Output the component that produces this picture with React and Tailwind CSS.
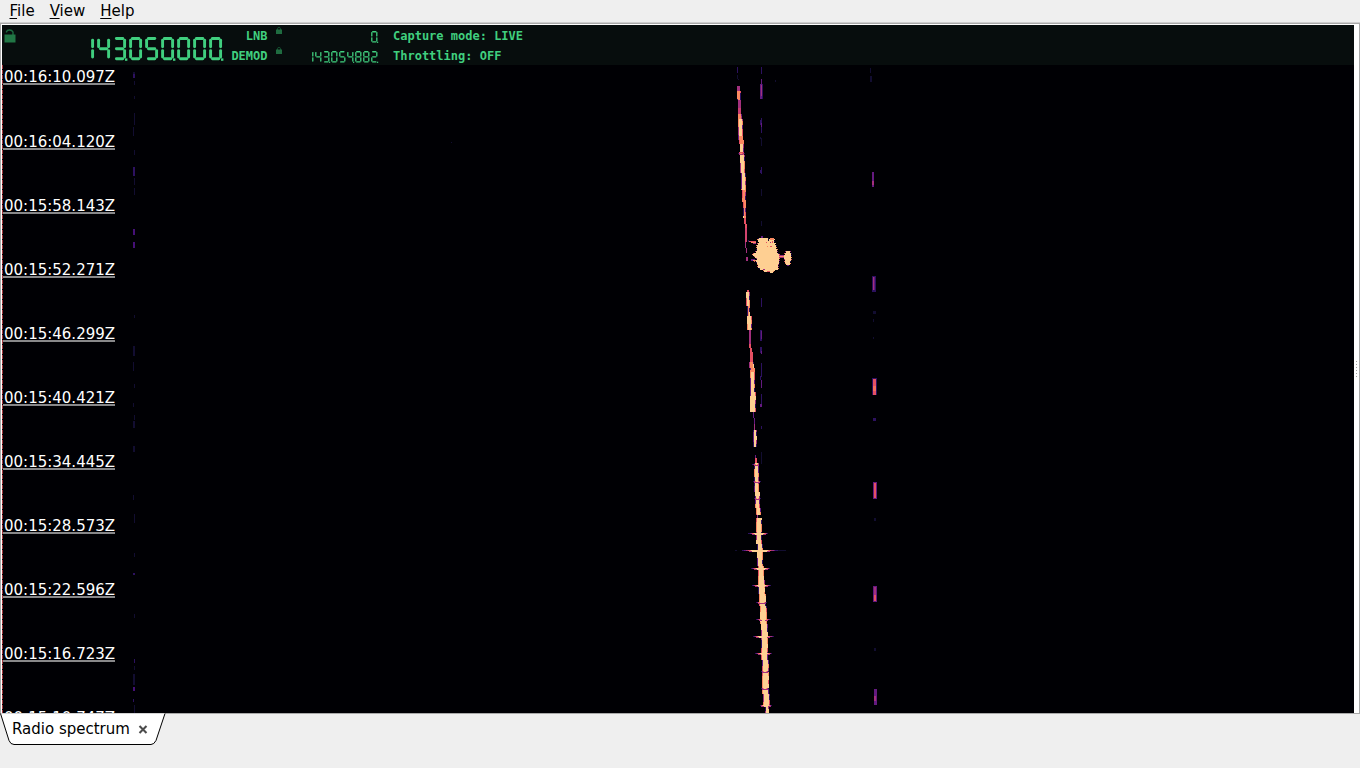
/**
 * Radio spectrum analyzer window
 * Menu bar, frequency readout, waterfall and dock tab
 */

const GREEN = '#40cf7f';

// Lit segments per digit: a top, b/c right, d bottom, e/f left, g middle
const SEGMENTS = {
  0: 'abcdef', 1: 'bc', 2: 'abged', 3: 'abgcd', 4: 'fgbc',
  5: 'afgcd', 6: 'afgedc', 7: 'abc', 8: 'abcdefg', 9: 'abcdfg'
};

// Segment end points on a 13 x 23 cell
const SEGMENT_LINES = {
  a: [3.4, 1.5, 9.8, 1.5],
  b: [11.6, 3.2, 11.6, 9.8],
  c: [11.6, 13.6, 11.6, 20],
  d: [3.4, 21.8, 9.8, 21.8],
  e: [1.6, 13.6, 1.6, 20],
  f: [1.6, 3.2, 1.6, 9.8],
  g: [3.4, 11.7, 9.8, 11.7]
};

const LcdNumber = ({ value, small = false }) => {
  const digits = value.split('');
  const width = digits.length * 16;
  const scale = small ? 0.5 : 1;

  return (
    <svg
      role="img"
      aria-label={value}
      width={width * scale}
      height={24 * scale}
      viewBox={`0 0 ${width} 24`}
      className="shrink-0"
    >
      {digits.map((digit, i) => (
        <g key={i} stroke={GREEN} strokeWidth={small ? 2.6 : 2.9} strokeLinecap="round">
          {SEGMENTS[digit].split('').map((name) => {
            const [x1, y1, x2, y2] = SEGMENT_LINES[name];
            return <line key={name} x1={x1 + i * 16} y1={y1} x2={x2 + i * 16} y2={y2} />;
          })}
          {(digits.length - i) % 3 === 1 && (
            <rect x={i * 16 + 12} y={21.4} width={2.4} height={2.4} fill={GREEN} stroke="none" />
          )}
        </g>
      ))}
    </svg>
  );
};

// Magma-like palette
const CREAM = '#fecf92';
const ORANGE = '#fb8861';
const RED = '#e55063';
const MAGENTA = '#a3307e';
const PURPLE = '#641a80';
const INDIGO = '#2d1160';
const NIGHT = '#120d31';

const FRINGE = [RED, MAGENTA, ORANGE, INDIGO, CREAM, ORANGE, PURPLE];

const noise = (n) => {
  const v = Math.sin(n * 12.9898) * 43758.5453;
  return v - Math.floor(v);
};

// Main carrier: [y start, y end, x start, x end, core width, core colour]
const CARRIER = [
  [67, 73, 737, 737, 1, INDIGO],
  [75, 80, 737, 738, 1, NIGHT],
  [86, 91, 737, 737, 3, MAGENTA],
  [91, 100, 738, 738, 2, ORANGE],
  [100, 108, 738, 738, 3, MAGENTA],
  [108, 114, 738, 738, 3, '#c83e73'],
  [114, 119, 739, 739, 2, ORANGE],
  [119, 136, 739, 739, 3, CREAM],
  [136, 144, 739, 740, 3, ORANGE],
  [144, 152, 741, 741, 2, CREAM],
  [152, 155, 739, 739, 5, RED],
  [155, 190, 741, 742, 3, CREAM],
  [190, 202, 743, 743, 2, ORANGE],
  [202, 218, 744, 744, 1, ORANGE],
  [218, 228, 744, 745, 2, RED],
  [228, 242, 745, 745, 2, '#d3436e'],
  [242, 253, 745, 746, 1, MAGENTA],
  [257, 261, 746, 746, 2, MAGENTA],
  [290, 292, 747, 747, 2, RED],
  [292, 306, 747, 747, 2, CREAM],
  [306, 316, 748, 748, 1, ORANGE],
  [316, 330, 748, 748, 3, CREAM],
  [330, 344, 749, 749, 2, MAGENTA],
  [344, 352, 749, 750, 2, RED],
  [352, 362, 750, 750, 3, RED],
  [362, 372, 750, 751, 3, ORANGE],
  [372, 392, 751, 751, 3, CREAM],
  [392, 412, 751, 751, 4, CREAM],
  [412, 424, 753, 754, 1, PURPLE],
  [424, 430, 754, 754, 1, MAGENTA],
  [430, 447, 754, 754, 2, CREAM],
  [455, 458, 755, 755, 1, PURPLE],
  [458, 463, 755, 755, 2, RED],
  [463, 482, 755, 755, 3, CREAM],
  [482, 500, 755, 756, 3, CREAM],
  [500, 515, 756, 757, 3, CREAM],
  [515, 518, 757, 757, 1, MAGENTA],
  [518, 534, 757, 757, 4, CREAM],
  [534, 552, 757, 758, 4, CREAM],
  [552, 580, 758, 759, 4, CREAM],
  [580, 606, 759, 760, 5, CREAM],
  [606, 640, 761, 762, 5, CREAM],
  [640, 680, 762, 763, 5, CREAM],
  [680, 707, 763, 764, 5, CREAM],
  [707, 713, 766, 766, 2, CREAM]
];

// Horizontal bursts: [y, left, right, core left, core right]
const BURSTS = [
  [153, 738, 745, 740, 742],
  [464, 752, 759, 755, 758],
  [481, 753, 761, 755, 759],
  [498, 754, 761, 756, 759],
  [533, 748, 768, 753, 765],
  [550, 742, 778, 750, 769],
  [568, 751, 770, 755, 767],
  [585, 752, 771, 756, 767],
  [602, 756, 767, 759, 765],
  [619, 756, 771, 760, 767],
  [636, 753, 774, 757, 769],
  [653, 755, 772, 759, 769],
  [671, 761, 769, 763, 767],
  [688, 761, 769, 763, 767],
  [705, 760, 772, 762, 770]
];

// Weaker spurs: [x, y, width, height, colour]
const SPURS = [
  [761, 67, 1, 7, INDIGO], [761, 79, 1, 5, PURPLE], [760, 84, 3, 15, INDIGO], [760, 84, 2, 15, PURPLE], [761, 85, 1, 11, MAGENTA],
  [760, 120, 2, 5, INDIGO], [761, 118, 1, 15, INDIGO], [761, 123, 1, 4, PURPLE], [760, 137, 1, 2, NIGHT], [761, 138, 1, 8, NIGHT],
  [761, 167, 1, 7, INDIGO], [760, 170, 2, 3, INDIGO], [761, 189, 1, 7, NIGHT], [761, 221, 1, 5, NIGHT],
  [761, 298, 1, 9, INDIGO], [760, 330, 2, 11, INDIGO], [761, 331, 1, 8, PURPLE], [760, 347, 2, 6, INDIGO],
  [761, 351, 1, 3, PURPLE], [761, 363, 1, 14, INDIGO], [760, 376, 1, 4, INDIGO], [761, 380, 1, 8, PURPLE],
  [761, 394, 1, 11, INDIGO], [760, 404, 2, 3, PURPLE], [761, 426, 1, 3, INDIGO], [761, 452, 1, 12, NIGHT],
  [870, 68, 1, 5, NIGHT], [870, 76, 2, 6, NIGHT],
  [872, 172, 2, 15, PURPLE], [872, 181, 2, 4, MAGENTA],
  [872, 276, 4, 16, INDIGO], [873, 277, 1, 13, MAGENTA], [874, 277, 1, 13, PURPLE],
  [873, 311, 3, 3, NIGHT], [873, 319, 1, 3, NIGHT], [873, 337, 1, 2, NIGHT],
  [872, 378, 5, 17, INDIGO], [873, 379, 3, 16, RED], [873, 386, 3, 5, '#f66e5c'],
  [873, 418, 3, 3, INDIGO],
  [873, 482, 4, 17, PURPLE], [874, 483, 2, 15, RED],
  [874, 518, 2, 3, NIGHT],
  [873, 586, 4, 16, PURPLE], [874, 587, 2, 9, MAGENTA], [874, 595, 2, 6, RED],
  [874, 648, 2, 3, NIGHT], [874, 689, 3, 16, PURPLE], [874, 696, 2, 5, MAGENTA],
  [133, 74, 2, 4, INDIGO], [133, 167, 2, 9, INDIGO], [133, 229, 2, 6, '#451077'], [133, 242, 2, 6, '#451077'],
  [133, 346, 2, 10, NIGHT], [133, 421, 2, 7, NIGHT], [133, 446, 2, 6, NIGHT], [133, 573, 2, 2, INDIGO],
  [134, 659, 1, 4, INDIGO], [133, 674, 2, 11, NIGHT], [133, 687, 2, 4, '#451077'], [133, 699, 1, 3, INDIGO],
  [133, 72, 2, 2, NIGHT], [134, 81, 1, 4, NIGHT], [134, 96, 1, 3, NIGHT], [134, 113, 1, 12, NIGHT],
  [133, 127, 1, 9, NIGHT], [134, 150, 1, 5, NIGHT], [134, 178, 1, 7, NIGHT], [134, 188, 1, 7, NIGHT],
  [134, 315, 1, 3, NIGHT], [133, 362, 1, 9, NIGHT], [134, 384, 1, 4, NIGHT], [133, 403, 1, 4, NIGHT],
  [134, 415, 1, 5, NIGHT], [133, 495, 1, 5, NIGHT], [134, 514, 1, 9, NIGHT], [134, 553, 1, 4, NIGHT],
  [134, 614, 1, 4, NIGHT], [134, 666, 1, 4, NIGHT], [134, 705, 1, 8, NIGHT],
  [775, 80, 1, 2, NIGHT], [451, 142, 1, 1, NIGHT], [735, 550, 2, 1, NIGHT], [778, 550, 8, 1, NIGHT]
];

// Meteor echo, one span per two rows: [y, left, right]
const ECHO = [
  [238, 759, 768], [239, 758, 774], [241, 759, 774], [243, 758, 775], [245, 757, 776],
  [247, 757, 776], [249, 757, 777], [251, 756, 777], [253, 754, 778], [254, 753, 779],
  [256, 755, 779], [258, 757, 779], [260, 756, 779], [262, 757, 779], [264, 758, 778],
  [266, 758, 778], [268, 760, 778], [270, 764, 774], [271, 770, 773]
];

const ECHO_TAIL = [
  [251, 786, 790], [253, 785, 791], [255, 784, 791], [257, 784, 791],
  [259, 785, 791], [261, 785, 790], [263, 786, 790]
];

const Carrier = () => {
  const rects = [];
  CARRIER.forEach(([y0, y1, x0, x1, width, color]) => {
    for (let y = y0; y < y1; y += 2) {
      const height = Math.min(2, y1 - y);
      const x = Math.round(x0 + ((x1 - x0) * (y - y0)) / (y1 - y0));
      const bright = color === CREAM || color === ORANGE;
      if (bright) {
        const left = FRINGE[Math.floor(noise(Math.floor(y / 9) + x) * FRINGE.length)];
        const right = FRINGE[Math.floor(noise(Math.floor(y / 4) + 91) * FRINGE.length)];
        rects.push([x - 1, y, 1, height, left], [x + width, y, 1, height, right]);
      }
      rects.push([x, y, width, height, color]);
    }
  });
  return rects.map(([x, y, w, h, fill], i) => (
    <rect key={i} x={x} y={y} width={w} height={h} fill={fill} />
  ));
};

const Bursts = () =>
  BURSTS.map(([y, left, right, coreLeft, coreRight]) => {
    const l = coreLeft - left;
    const r = right - coreRight;
    return (
      <g key={y}>
        <rect x={left} y={y} width={right - left} height={1} fill={INDIGO} />
        <rect x={coreLeft - 1} y={y + 1} width={coreRight - coreLeft + 2} height={1} fill={MAGENTA} />
        <rect x={left + l * 0.3} y={y} width={right - left - (l + r) * 0.3} height={1} fill={PURPLE} />
        <rect x={left + l * 0.5} y={y} width={right - left - (l + r) * 0.5} height={1} fill={MAGENTA} />
        <rect x={coreLeft - l * 0.2} y={y} width={coreRight - coreLeft + (l + r) * 0.2} height={1} fill={RED} />
        <rect x={coreLeft} y={y} width={coreRight - coreLeft} height={1} fill={ORANGE} />
        <rect x={coreLeft + 1} y={y} width={coreRight - coreLeft - 2} height={1} fill={CREAM} />
        {coreRight - coreLeft > 6 && (
          <rect x={coreLeft + 2} y={y} width={coreRight - coreLeft - 4} height={2} fill={CREAM} />
        )}
      </g>
    );
  });

const Echo = () => (
  <g>
    {[...ECHO, ...ECHO_TAIL].map(([y, left, right]) => (
      <g key={`${y}-${left}`}>
        <rect x={left} y={y} width={right - left} height={y === 238 ? 1 : 2} fill={CREAM} />
        <rect x={left - 1} y={y} width={1} height={1} fill={FRINGE[Math.floor(noise(y) * 6)]} />
        <rect x={right} y={y} width={1} height={1} fill={FRINGE[Math.floor(noise(y + 7) * 6)]} />
      </g>
    ))}
    {/* Ragged bits around the head */}
    <rect x={768} y={238} width={1} height={3} fill={NIGHT} />
    <rect x={761} y={236} width={2} height={2} fill={PURPLE} />
    <rect x={770} y={238} width={4} height={2} fill={ORANGE} />
    <rect x={772} y={241} width={1} height={2} fill={RED} />
    <rect x={770} y={242} width={1} height={1} fill={MAGENTA} />
    <rect x={766} y={242} width={1} height={1} fill={RED} />
    <rect x={770} y={246} width={2} height={1} fill={RED} />
    <rect x={767} y={246} width={1} height={1} fill={ORANGE} />
    <rect x={748} y={240} width={1} height={2} fill={INDIGO} />
    <rect x={749} y={241} width={7} height={1} fill={RED} />
    <rect x={751} y={242} width={5} height={1} fill={ORANGE} />
    <rect x={753} y={243} width={3} height={1} fill={MAGENTA} />
    <rect x={751} y={259} width={4} height={2} fill={PURPLE} />
    <rect x={753} y={260} width={3} height={1} fill={ORANGE} />
    <rect x={754} y={261} width={1} height={1} fill={RED} />
    <rect x={763} y={269} width={2} height={1} fill={MAGENTA} />
    <rect x={767} y={271} width={3} height={1} fill={RED} />
    <rect x={779} y={255} width={5} height={3} fill={MAGENTA} />
    <rect x={779} y={256} width={5} height={1} fill={ORANGE} />
    <rect x={787} y={265} width={2} height={1} fill={PURPLE} />
  </g>
);

const TIMESTAMPS = [
  { label: '00:16:10.097Z', height: 'h-5' },
  { label: '00:16:04.120Z', height: 'h-[65px]' },
  { label: '00:15:58.143Z', height: 'h-16' },
  { label: '00:15:52.271Z', height: 'h-16' },
  { label: '00:15:46.299Z', height: 'h-16' },
  { label: '00:15:40.421Z', height: 'h-16' },
  { label: '00:15:34.445Z', height: 'h-16' },
  { label: '00:15:28.573Z', height: 'h-16' },
  { label: '00:15:22.596Z', height: 'h-16' },
  { label: '00:15:16.723Z', height: 'h-16' },
  { label: '00:15:10.747Z', height: 'h-16' }
];

const Waterfall = () => (
  <div className="relative h-[648px] overflow-hidden bg-[#000004]">
    <svg
      className="absolute inset-0"
      width="1352"
      height="648"
      viewBox="2 65 1352 648"
      shapeRendering="crispEdges"
    >
      <line x1="2.5" y1="65" x2="2.5" y2="713" stroke="#a63a3f" strokeDasharray="4 1" />
      {SPURS.map(([x, y, w, h, fill], i) => (
        <rect key={i} x={x} y={y} width={w} height={h} fill={fill} />
      ))}
      <Carrier />
      <Bursts />
      <Echo />
    </svg>
    <div className="relative flex flex-col items-start pl-px text-[15px] text-white">
      {TIMESTAMPS.map(({ label, height }) => (
        <div key={label} className={`flex shrink-0 items-end ${height}`}>
          <span className="border-b-2 border-[#88888a] pr-[0.4px] pl-px leading-[11px]">{label}</span>
        </div>
      ))}
    </div>
  </div>
);

const Padlock = ({ open = false }) =>
  open ? (
    <svg width="12" height="14" viewBox="0 0 12 14" className="shrink-0">
      <path d="M2.5 3.5V2.8Q3 1 5.5 1T9 3v3" fill="none" stroke="#1d6b40" strokeWidth="1.4" />
      <rect x="0.5" y="5.500" width="11" height="8" fill="#217645" />
    </svg>
  ) : (
    <svg width="6" height="7" viewBox="0 0 6 7" className="shrink-0">
      <path d="M1.5 3V1.5Q1.5.5 3 .5T4.5 1.5V3" fill="none" stroke="#174f31" />
      <rect y="2.5" width="6" height="4.5" fill="#1f6c40" />
    </svg>
  );

const FrequencyRow = ({ label, value }) => (
  <div className="flex h-5 items-start">
    <span className="w-[43px] pt-px text-right">{label}</span>
    <div className="ml-2 pt-0.5">
      <Padlock />
    </div>
    <div className="ml-auto pt-1.5 pr-[0.5px]">
      <LcdNumber value={value} small />
    </div>
  </div>
);

const Readout = () => (
  <div className="flex h-10 bg-[#070d0d] font-['DejaVu_Sans_Mono',monospace] text-xs leading-5 font-bold text-[#40cf7f]">
    <div className="pt-1 pl-0.5">
      <Padlock open />
    </div>
    <div className="pt-3 pl-[65px]">
      <LcdNumber value="143050000" />
    </div>
    <div className="ml-[-0.5px] w-[155px]">
      <FrequencyRow label="LNB" value="0" />
      <FrequencyRow label="DEMOD" value="143054882" />
    </div>
    <div className="ml-[13.5px] pt-px">
      <div>Capture mode: LIVE</div>
      <div>Throttling: OFF</div>
    </div>
  </div>
);

const MENUS = ['File', 'View', 'Help'];

const MenuBar = () => (
  <div className="flex h-[22px] gap-[15px] pl-[9.5px] text-[15px] leading-[22px]">
    {MENUS.map((name) => (
      <span key={name}>
        <span className="underline decoration-1 underline-offset-2">{name[0]}</span>
        {name.slice(1)}
      </span>
    ))}
  </div>
);

const DockTab = () => (
  <div className="relative flex h-8 w-[166px] items-center">
    <svg className="absolute top-[-1px] left-0" width="166" height="33" viewBox="0 0 166 33">
      <path
        d="M.5 0.5L9 27.5Q10.5 31.5 14 31.5H151Q154 31.5 156 27.5L165 .5"
        fill="#fff"
        stroke="#000"
      />
    </svg>
    <span className="relative pb-0.5 pl-3 text-[15px] leading-[30px]">Radio spectrum</span>
    <svg className="relative mb-px ml-2" width="10" height="10" viewBox="0 0 10 10">
      <path d="M1.5 1l7 7M8.5 1l-7 7" stroke="#4c4c4c" strokeWidth="2.1" />
    </svg>
  </div>
);

export default function App() {
  return (
    <div className="h-screen w-full overflow-hidden bg-[#efefef] font-['DejaVu_Sans',sans-serif] text-black">
      <MenuBar />
      <div className="h-px bg-[#cfcfcf]" />
      <div className="flex h-[691px] border border-[#a9a9a9] bg-white pt-px pl-px">
        <div className="w-[1352px] shrink-0">
          <Readout />
          <Waterfall />
        </div>
        {/* Side panel splitter handle */}
        <div className="flex grow flex-col items-center justify-center gap-0.5">
          {[0, 1, 2, 3, 4, 5].map((dot) => (
            <div key={dot} className="size-px bg-[#a0a0a0]" />
          ))}
        </div>
      </div>
      <DockTab />
    </div>
  );
}
